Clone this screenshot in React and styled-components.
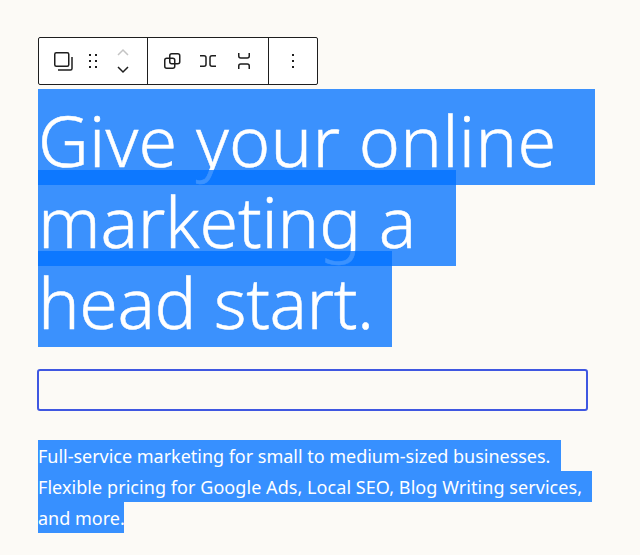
import React from "react";
import styled, { createGlobalStyle } from "styled-components";

const GlobalStyle = createGlobalStyle`
  html, body {
    margin: 0;
    background: #fcfaf6;
  }
  body {
    font-family: "Noto Sans", "Open Sans", sans-serif;
  }
`;

const Page = styled.div`
  width: 640px;
  height: 555px;
  padding: 37px 0 0 38px;
  box-sizing: border-box;
  overflow: hidden;
`;

const Toolbar = styled.div`
  display: flex;
  width: 280px;
  height: 48px;
  box-sizing: border-box;
  border: 1px solid #1e1e1e;
  border-radius: 2px;
  background: #fff;
`;

const ToolGroup = styled.div`
  display: flex;
  align-items: center;
  width: ${(p) => p.$width}px;
  box-sizing: border-box;
  border-right: ${(p) => (p.$last ? "none" : "1px solid #1e1e1e")};
  padding-left: ${(p) => p.$pad}px;
  gap: ${(p) => p.$gap || 0}px;
`;

const Icon = styled.svg`
  display: block;
  width: 24px;
  height: 24px;
  margin-left: ${(p) => p.$left || 0}px;
  fill: none;
  stroke: #1e1e1e;
  stroke-width: 1.5;
  flex: none;
`;

const Dots = styled.path`
  stroke: none;
  fill: #1e1e1e;
`;

const Mover = styled.div`
  display: flex;
  flex-direction: column;
  gap: 6px;
  margin-left: 8px;
`;

const Chevron = styled.svg`
  display: block;
  width: 24px;
  height: 12px;
  fill: none;
  stroke: ${(p) => (p.$off ? "#c4c4c4" : "#1e1e1e")};
  stroke-width: 1.5;
`;

const Heading = styled.h1`
  margin: 4px 0 0;
  font-weight: 300;
  font-size: 70px;
  color: #fff;
  -webkit-text-stroke: 0.5px #fff;
`;

// position: relative so each line's fill is painted over the descenders of the line above
const HeadLine = styled.span`
  position: relative;
  display: block;
  width: ${(p) => p.$width}px;
  height: 96px;
  line-height: 102px;
  margin-bottom: -15px;
  background: rgba(0, 113, 255, 0.77);
  white-space: pre;
  letter-spacing: ${(p) => p.$track || 0}px;
`;

const EmptyBlock = styled.div`
  width: 551px;
  height: 42px;
  box-sizing: border-box;
  margin: 37px 0 0 -1px;
  border: 2px solid #3f57e1;
  border-radius: 3px;
`;

const Intro = styled.p`
  margin: 29px 0 0;
  font-size: 18px;
  color: #fff;
`;

const IntroLine = styled.span`
  display: block;
  width: ${(p) => p.$width}px;
  height: 31px;
  line-height: 33px;
  background: #3790ff;
  white-space: pre;
  letter-spacing: ${(p) => p.$track || 0}px;
`;

export default function App() {
  return (
    <Page>
      <GlobalStyle />
      <Toolbar>
        <ToolGroup $width={109} $pad={12}>
          <Icon viewBox="0 0 24 24">
            <rect x="3.75" y="3.75" width="14" height="13.5" rx="1.5" />
            <path d="M7 21h12.5a1.5 1.5 0 0 0 1.5-1.5V8" />
          </Icon>
          <Icon viewBox="0 0 24 24" $left={4}>
            <Dots d="M10 5h2v2h-2zM16 5h2v2h-2zM10 11h2v2h-2zM16 11h2v2h-2zM10 17h2v2h-2zM16 17h2v2h-2z" />
          </Icon>
          <Mover>
            <Chevron $off viewBox="0 0 24 12">
              <path d="M7 9l5-5 5 5" />
            </Chevron>
            <Chevron viewBox="0 0 24 12">
              <path d="M7 3l5 5 5-5" />
            </Chevron>
          </Mover>
        </ToolGroup>
        <ToolGroup $width={121} $pad={12} $gap={12}>
          <Icon viewBox="0 0 24 24">
            <rect x="4.75" y="9.25" width="10" height="10" rx="2" />
            <rect x="9.75" y="4.75" width="10" height="10" rx="2" />
          </Icon>
          <Icon viewBox="0 0 24 24">
            <path d="M4 6.75h4a2 2 0 0 1 2 2v6.5a2 2 0 0 1-2 2H4M20 6.75h-4a2 2 0 0 0-2 2v6.5a2 2 0 0 0 2 2h4" />
          </Icon>
          <Icon viewBox="0 0 24 24">
            <path d="M6.75 4v3a2 2 0 0 0 2 2h6.5a2 2 0 0 0 2-2V4M6.75 20v-3a2 2 0 0 1 2-2h6.5a2 2 0 0 1 2 2v3" />
          </Icon>
        </ToolGroup>
        <ToolGroup $width={48} $pad={12} $last>
          <Icon viewBox="0 0 24 24">
            <Dots d="M11 5h2v2h-2zM11 11h2v2h-2zM11 17h2v2h-2z" />
          </Icon>
        </ToolGroup>
      </Toolbar>
      <Heading>
        <HeadLine $width={557} $track={0.25}>Give your online</HeadLine>
        <HeadLine $width={418} $track={-0.2}>marketing a</HeadLine>
        <HeadLine $width={354} $track={-0.45}>head start.</HeadLine>
      </Heading>
      <EmptyBlock />
      <Intro>
        <IntroLine $width={523} $track={-0.02}>Full-service marketing for small to medium-sized businesses.</IntroLine>
        <IntroLine $width={554} $track={0.06}>Flexible pricing for Google Ads, Local SEO, Blog Writing services,</IntroLine>
        <IntroLine $width={86}>and more.</IntroLine>
      </Intro>
    </Page>
  );
}
